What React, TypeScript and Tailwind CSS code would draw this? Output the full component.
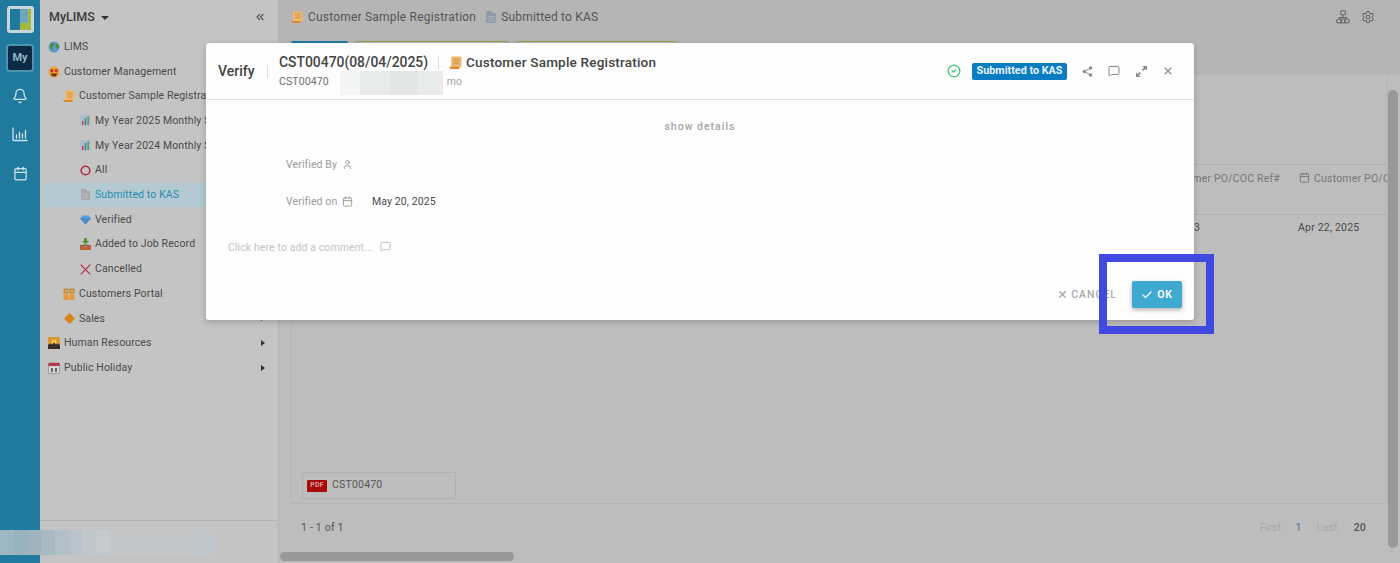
import { Bell, Calendar, Check, ChevronsLeft, CircleCheck, MessageSquare, Settings, User, X } from "lucide-react";
import type { ReactNode } from "react";

const font = "font-['Roboto',sans-serif]";

// small full-colour icons, drawn because there is no emoji font
const ScrollIcon = ({ size = 12 }: { size?: number }) => (
  <svg width={size} height={size} viewBox="0 0 12 12">
    <rect x="2" y="0.5" width="9.500" height="10" rx="1" fill="#eeb76f" />
    <path d="M4 3h5.500M4 5h5.500M4 7h5.500" stroke="#c98a3a" strokeWidth="0.8" />
    <path d="M0 10h9.500v2H1.500z" fill="#d98a2b" />
  </svg>
);
const ChartIcon = () => (
  <svg width="11" height="11" viewBox="0 0 11 11">
    <rect width="11" height="11" fill="#aebdca" />
    <rect x="2" y="6" width="1.6" height="4" fill="#d0453c" />
    <rect x="4.7" y="3" width="1.6" height="7" fill="#3b7fb8" />
    <rect x="7.4" y="1.5" width="1.6" height="8.5" fill="#5f9e3e" />
  </svg>
);
const DocIcon = ({ fill = "#a9a9a9", size = 11 }: { fill?: string; size?: number }) => (
  <svg width={size} height={size} viewBox="0 0 11 11">
    <path d="M1 0h5l1.500 2H10v9H1z" fill={fill} />
    <path d="M2.500 5h6M2.500 7h6M2.500 9h6" stroke="#ffffff" strokeOpacity="0.3" strokeWidth="0.7" />
  </svg>
);
const GlobeIcon = () => (
  <svg width="12" height="12" viewBox="0 0 12 12">
    <circle cx="6" cy="6" r="5.5" fill="#5b9ccb" />
    <path d="M3 1.5l3 1 .5 2-2 1 1 2.5-1.5 1-2-3zM8 3l2.5.5.8 3-2 1.5-1.3-2z" fill="#4e8f3a" />
  </svg>
);
const HeartEyesIcon = () => (
  <svg width="12" height="12" viewBox="0 0 12 12">
    <circle cx="6" cy="6" r="5.5" fill="#eaa033" />
    <circle cx="3.8" cy="4.6" r="1.6" fill="#c9302c" />
    <circle cx="8.2" cy="4.6" r="1.6" fill="#c9302c" />
    <path d="M3 7.4h6a3 3 0 0 1-6 0z" fill="#6b3410" />
  </svg>
);
const RingIcon = () => (
  <svg width="11" height="11" viewBox="0 0 11 11">
    <circle cx="5.5" cy="5.5" r="4.3" fill="none" stroke="#b32a42" strokeWidth="1.6" />
  </svg>
);
const GemIcon = () => (
  <svg width="11" height="11" viewBox="0 0 11 11">
    <path d="M2.5 1.5h6L11 4.2 5.500 10.500 0 4.200z" fill="#5b9fd8" />
    <path d="M0 4.200h11L5.500 10.500z" fill="#4a8cc6" />
  </svg>
);
const TrayIcon = () => (
  <svg width="11" height="12" viewBox="0 0 11 12">
    <path d="M4 0h3v3h2L5.500 6.500 2 3h2z" fill="#4f9a3d" />
    <path d="M0 7h3l1 1.500h3L8 7h3v5H0z" fill="#b8623a" />
    <rect x="2.500" y="6.800" width="6" height="1" fill="#6b3a20" />
  </svg>
);
const CrossIcon = () => (
  <svg width="11" height="11" viewBox="0 0 11 11">
    <path d="M0.700 0.700l9.600 9.600M10.300 0.700L0.700 10.300" stroke="#b32a42" strokeWidth="1.100" />
  </svg>
);
const PeopleIcon = () => (
  <svg width="12" height="12" viewBox="0 0 12 12">
    <rect x="0.500" y="0.500" width="5" height="5" fill="#b98a3e" />
    <rect x="6.500" y="0.500" width="5" height="5" fill="#b98a3e" />
    <circle cx="3" cy="3" r="1.500" fill="#e8a84f" />
    <circle cx="9" cy="3" r="1.500" fill="#e8a84f" />
    <path d="M0.500 12V7.800a2.500 2.500 0 0 1 5 0V12zM6.500 12V7.800a2.500 2.500 0 0 1 5 0V12z" fill="#e59a3c" />
  </svg>
);
const OrangeDiamond = () => (
  <svg width="11" height="11" viewBox="0 0 11 11">
    <path d="M5.500 0L11 5.500 5.500 11 0 5.500z" fill="#d9851c" />
  </svg>
);
const SunsetIcon = () => (
  <svg width="12" height="12" viewBox="0 0 12 12">
    <rect width="12" height="12" rx="1" fill="#d99a2e" />
    <circle cx="6" cy="5" r="2.500" fill="#f2c75c" />
    <path d="M0 12V8l2-1.500 2 1 2-2 2 2 2-1 2 1.500v4z" fill="#3a2f28" />
  </svg>
);
const HolidayIcon = () => (
  <svg width="12" height="12" viewBox="0 0 12 12">
    <rect x="0.500" y="1" width="11" height="10.500" rx="1" fill="#d8d8d8" stroke="#777777" strokeWidth="0.600" />
    <rect x="0.500" y="1" width="11" height="3" fill="#b5374a" />
    <path d="M3 6h2v4H3zM7 6h2v4H7z" fill="#666666" />
  </svg>
);
const ShareIcon = () => (
  <svg width="11" height="11" viewBox="0 0 11 11" fill="#8a8a8a">
    <circle cx="8.500" cy="2" r="1.700" />
    <circle cx="8.500" cy="9" r="1.700" />
    <circle cx="2.300" cy="5.500" r="1.700" />
    <path d="M2.300 5.500L8.500 2M2.300 5.500L8.500 9" stroke="#8a8a8a" strokeWidth="1" />
  </svg>
);
const ExpandIcon = () => (
  <svg width="11" height="11" viewBox="0 0 11 11" fill="#8a8a8a">
    <path d="M6.500 0H11v4.500L9.400 2.900 7.300 5 6 3.700l2.100-2.100zM4.500 11H0V6.500l1.600 1.600L3.700 6 5 7.300 2.900 9.400z" />
  </svg>
);
const TreeIcon = () => (
  <svg width="14" height="14" viewBox="0 0 14 14" fill="none" stroke="#6a6a6a" strokeWidth="1.100">
    <rect x="4.700" y="0.800" width="4.600" height="4" rx="0.800" />
    <path d="M7 4.800v2.400M3.500 9.500V7.600h7v1.900" />
    <rect x="0.700" y="9" width="4.600" height="4" rx="2" />
    <rect x="8.700" y="9" width="4.600" height="4" rx="2" />
    <rect x="4.700" y="9" width="4.600" height="4" rx="2" />
  </svg>
);
const StatsIcon = () => (
  <svg width="16" height="15" viewBox="0 0 16 15" fill="none" stroke="#cfe3ec" strokeWidth="1.300" strokeLinecap="round">
    <path d="M1 1v11.500a1 1 0 0 0 1 1h13" />
    <path d="M4.500 8v3M7.500 5.500V11M10.500 7v4M13.500 3.500V11" />
  </svg>
);

type NavItem = { label: string; icon: ReactNode; depth: 0 | 1 | 2; arrow?: boolean; active?: boolean };

const navItems: NavItem[] = [
  { label: "LIMS", icon: <GlobeIcon />, depth: 0 },
  { label: "Customer Management", icon: <HeartEyesIcon />, depth: 0 },
  { label: "Customer Sample Registration", icon: <ScrollIcon />, depth: 1 },
  { label: "My Year 2025 Monthly Summary", icon: <ChartIcon />, depth: 2 },
  { label: "My Year 2024 Monthly Summary", icon: <ChartIcon />, depth: 2 },
  { label: "All", icon: <RingIcon />, depth: 2 },
  { label: "Submitted to KAS", icon: <DocIcon />, depth: 2, active: true },
  { label: "Verified", icon: <GemIcon />, depth: 2 },
  { label: "Added to Job Record", icon: <TrayIcon />, depth: 2 },
  { label: "Cancelled", icon: <CrossIcon />, depth: 2 },
  { label: "Customers Portal", icon: <PeopleIcon />, depth: 1 },
  { label: "Sales", icon: <OrangeDiamond />, depth: 1, arrow: true },
  { label: "Human Resources", icon: <SunsetIcon />, depth: 0, arrow: true },
  { label: "Public Holiday", icon: <HolidayIcon />, depth: 0, arrow: true },
];

const depthPad = { 0: "pl-[8px]", 1: "pl-[23px]", 2: "pl-[39px]" };

const NavRow = ({ item }: { item: NavItem }) => (
  <div
    className={`flex h-[24.7px] items-center whitespace-nowrap pr-[13px] text-[10.500px] tracking-[0.12px] ${depthPad[item.depth]} ${
      item.active ? "ml-[3px] rounded-l-[2px] bg-[#b3cad3] !pl-[36px] text-[#2a8aae]" : "text-[#4a4a4a]"
    }`}
  >
    <span className="mr-[4px] flex w-[12px] shrink-0 items-center justify-center">{item.icon}</span>
    <span className="flex-1 overflow-hidden">{item.label}</span>
    {item.arrow && <span className="h-0 w-0 border-y-[3.500px] border-l-[4px] border-y-transparent border-l-[#333333]" />}
  </div>
);

const Rail = () => (
  <aside className="flex h-full w-[40px] shrink-0 flex-col items-center bg-[#1f7a9e]">
    <div className="mt-[6px] flex h-[27px] w-[27px] items-center justify-center rounded-[3px] bg-[#c8d5da]">
      <div className="grid h-[21px] w-[21px] grid-cols-[10px_11px] grid-rows-[14px_7px]">
        <div className="row-span-2 bg-[#1f7a9e]" />
        <div className="flex">
          <div className="flex-1 bg-[#6fa6bf]" />
          <div className="w-[3px] bg-[#a6b93c]" />
        </div>
        <div className="bg-[#a6b93c]" />
      </div>
    </div>
    <div className="mt-[11px] flex h-[28px] w-[28px] items-center justify-center rounded-[3px] bg-[#4d93af]">
      <div className="flex h-[24px] w-[24px] items-center justify-center rounded-[2px] bg-[#0c2a43] text-[11px] font-bold text-[#8fb4c8]">
        My
      </div>
    </div>
    <Bell className="mt-[16px] h-[16px] w-[16px] text-[#cfe3ec]" strokeWidth={2} />
    <div className="mt-[23px]">
      <StatsIcon />
    </div>
    <Calendar className="mt-[24px] h-[15px] w-[15px] text-[#cfe3ec]" strokeWidth={2} />
  </aside>
);

const Sidebar = () => (
  <nav className="flex h-full w-[239px] shrink-0 flex-col border-r border-[#b3b3b3] bg-[#c4c4c4]">
    <div className="flex h-[34.500px] items-center pl-[9px] pr-[12px]">
      <span className="text-[12.500px] font-medium text-[#3b3b3b]">MyLIMS</span>
      <span className="ml-[6px] mt-[2px] h-0 w-0 border-x-[4px] border-t-[4px] border-x-transparent border-t-[#333333]" />
      <ChevronsLeft className="ml-auto h-[12px] w-[12px] text-[#555555]" strokeWidth={2.500} />
    </div>
    <div className="flex-1 overflow-hidden">
      {navItems.map((item) => (
        <NavRow key={item.label} item={item} />
      ))}
    </div>
    <div className="h-[43px] shrink-0 border-t border-[#b3b3b3]" />
  </nav>
);

const Main = () => (
  <main className="relative flex h-full flex-1 flex-col overflow-hidden bg-[#bdbdbd] pr-[12px] text-[#555555]">
    <header className="-mr-[12px] bg-[#b5b5b5]">
      <div className="flex h-[34px] items-center pl-[12px] pr-[25px] text-[12px] tracking-[0.2px]">
        <ScrollIcon />
        <span className="ml-[5px]">Customer Sample Registration</span>
        <span className="ml-[9px]">
          <DocIcon fill="#8f9ba6" size={12} />
        </span>
        <span className="ml-[4px]">Submitted to KAS</span>
        <div className="ml-auto flex items-center gap-[11px]">
          <TreeIcon />
          <Settings className="h-[14px] w-[14px] text-[#6a6a6a]" strokeWidth={1.800} />
        </div>
      </div>
      <div className="flex h-[41px] gap-[7px] pl-[12px] pt-[7px]">
        <div className="h-[10px] w-[57px] rounded-t-[2px] bg-[#1f7a9e]" />
        <div className="h-[10px] w-[154px] rounded-t-[2px] border border-[#8fae4a]" />
        <div className="h-[10px] w-[160px] rounded-t-[2px] border border-[#8fae4a]" />
      </div>
    </header>
    <div className="ml-[12px] flex h-[429px] shrink-0 flex-col border-x border-b border-[#b3b3b3]">
      <div className="flex-1 pt-[89px]">
        <div className="flex h-[51px] justify-end overflow-hidden whitespace-nowrap border-y border-[#b0b0b0] text-[10.500px] tracking-[0.2px] text-[#777777]">
          <div className="pr-[19px] pt-[6px]">Customer PO/COC Ref#</div>
          <div className="flex w-[88px] shrink-0 items-start gap-[4px] overflow-hidden pt-[6px]">
            <Calendar className="mt-[1px] h-[11px] w-[11px] shrink-0" strokeWidth={2} />
            Customer PO/COC Date
          </div>
        </div>
        <div className="flex justify-end pt-[5px] text-[10.500px] tracking-[0.2px] text-[#4a4a4a]">
          <div className="pr-[98px]">3</div>
          <div className="w-[89px] shrink-0 whitespace-nowrap">Apr 22, 2025</div>
        </div>
      </div>
      <div className="mb-[4px] ml-[10px] flex h-[27px] w-[154px] items-center gap-[5px] border border-[#b0b0b0] pl-[4px] text-[10.500px] tracking-[0.2px]">
        <span className="flex h-[12px] w-[20px] items-center justify-center rounded-[1px] bg-[#a80a0a] text-[7px] font-bold text-[#d8a0a0]">
          PDF
        </span>
        <span className="-mt-[1px]">CST00470</span>
      </div>
    </div>
    <footer className="ml-[22px] flex h-[48px] shrink-0 items-start justify-between pr-[22px] pt-[16px] text-[10.500px] tracking-[0.2px]">
      <span>1 - 1 of 1</span>
      <div className="flex">
        <span className="text-[#a8a8a8]">First</span>
        <span className="ml-[14px] text-[#3f7fa0]">1</span>
        <span className="ml-[15px] text-[#a8a8a8]">Last</span>
        <span className="ml-[16px] font-medium">20</span>
      </div>
    </footer>
    <div className="absolute bottom-[2px] left-[1px] h-[9px] w-[234px] rounded-full bg-[#989898]" />
    <div className="absolute bottom-[15px] right-[2px] top-[90px] w-[10px] rounded-full bg-[#989898]" />
  </main>
);

const Dialog = () => (
  <section className="absolute left-[206px] top-[43px] flex h-[277px] w-[988px] flex-col rounded-[3px] bg-[#fdfdfd] shadow-[0_2px_6px_rgba(0,0,0,0.2)]">
    <header className="flex h-[57px] shrink-0 items-center border-b border-[#e3e3e3] pl-[12px] pr-[20px]">
      <span className="w-[49px] text-[14px] font-medium text-[#444444]">Verify</span>
      <span className="h-[13px] w-px bg-[#dddddd]" />
      <div className="ml-[11px] flex h-full flex-col pt-[10px]">
        <div className="flex h-[19px] items-center">
          <span className="text-[13.900px] font-medium text-[#444444]">CST00470(08/04/2025)</span>
          <span className="ml-[10px] h-[13px] w-px bg-[#dddddd]" />
          <span className="ml-[10px]">
            <ScrollIcon size={13} />
          </span>
          <span className="ml-[4px] text-[13.500px] font-medium tracking-[0.2px] text-[#444444]">
            Customer Sample Registration
          </span>
        </div>
        <div className="mt-[2px] flex items-center text-[10.500px] tracking-[0.1px] text-[#6e6e6e]">
          <span>CST00470</span>
          <span className="ml-[118px] text-[#a5a5a5]">mo</span>
        </div>
      </div>
      <div className="ml-auto flex items-center">
        <CircleCheck className="h-[14px] w-[14px] text-[#3dc47e]" strokeWidth={2.200} />
        <span className="ml-[11px] flex h-[17px] w-[95px] items-center justify-center rounded-[2px] bg-[#0a7cc1] text-[10.800px] font-bold text-[#e6f3fa]">
          Submitted to KAS
        </span>
        <span className="ml-[15px]">
          <ShareIcon />
        </span>
        <MessageSquare className="ml-[15px] h-[12px] w-[12px] text-[#8a8a8a]" strokeWidth={2} />
        <span className="ml-[16px]">
          <ExpandIcon />
        </span>
        <X className="ml-[15px] h-[12px] w-[12px] text-[#8a8a8a]" strokeWidth={2.200} />
      </div>
    </header>
    <div className="flex flex-1 flex-col">
      <div className="pt-[19px] text-center text-[10.500px] font-medium tracking-[1px] text-[#a5a5a5]">show details</div>
      <div className="mt-[24px] flex h-[12px] items-center pl-[80px] text-[10.500px] tracking-[0.1px] text-[#9c9c9c]">
        <span className="w-[56px]">Verified By</span>
        <User className="h-[11px] w-[11px]" strokeWidth={2} />
      </div>
      <div className="mt-[25px] flex h-[12px] items-center pl-[80px] text-[10.500px] tracking-[0.1px] text-[#9c9c9c]">
        <span className="w-[56px]">Verified on</span>
        <Calendar className="h-[11px] w-[11px]" strokeWidth={2} />
        <span className="ml-[19px] text-[#4a4a4a]">May 20, 2025</span>
      </div>
      <div className="mt-[34px] flex h-[12px] items-center pl-[22px] text-[10.500px] tracking-[0.1px] text-[#c4c4c4]">
        <span>Click here to add a comment...</span>
        <MessageSquare className="ml-[7px] -mt-[2px] h-[11px] w-[11px] text-[#bbbbbb]" strokeWidth={2} />
      </div>
      <div className="mt-auto flex items-center justify-end pb-[12px] pr-[12px]">
        <span className="flex items-center gap-[3px] text-[10.500px] font-medium tracking-[1px] text-[#aaaaaa]">
          <X className="h-[11px] w-[11px]" strokeWidth={3} />
          CANCEL
        </span>
        <button className="ml-[15px] flex h-[27px] w-[50px] items-center justify-center gap-[4px] rounded-[2px] bg-[#3fa9cf] text-[10.500px] font-bold tracking-[0.8px] text-[#f2fafd] shadow-[0_2px_4px_rgba(0,0,0,0.3)]">
          <Check className="h-[12px] w-[12px]" strokeWidth={2.800} />
          OK
        </button>
      </div>
    </div>
  </section>
);

export default function App() {
  return (
    <div className={`relative flex h-[563px] w-[1400px] overflow-hidden ${font}`}>
      <Rail />
      <Sidebar />
      <Main />
      <Dialog />
      {/* blurred-out user details */}
      <div className="absolute left-[340px] top-[71px] flex h-[24px] w-[103px] overflow-hidden">
        <div className="w-[20px] bg-[#f4f5f5]" />
        <div className="w-[30px] bg-[#e9ebeb]" />
        <div className="w-[28px] bg-[#e4e6e6]" />
        <div className="w-[25px] bg-[#eaecec]" />
      </div>
      <div className="absolute left-0 top-[530px] flex h-[25px] w-[215px] bg-[#c5c6c7]">
        <div className="w-[14px] bg-[#9fb7c2]" />
        <div className="w-[13px] bg-[#98b2be]" />
        <div className="w-[14px] bg-[#a0b4be]" />
        <div className="w-[14px] bg-[#a8bac3]" />
        <div className="w-[14px] bg-[#b2c0c8]" />
        <div className="w-[13px] bg-[#b9c4ca]" />
        <div className="w-[14px] bg-[#c0c8cc]" />
        <div className="w-[14px] bg-[#c4cace]" />
        <div className="ml-[80px] w-[23px] bg-[#c2c7cb]" />
      </div>
      {/* annotation drawn on the screenshot */}
      <div className="absolute left-[1099px] top-[254px] h-[80px] w-[115px] border-[8px] border-[#4049e0]" />
    </div>
  );
}
